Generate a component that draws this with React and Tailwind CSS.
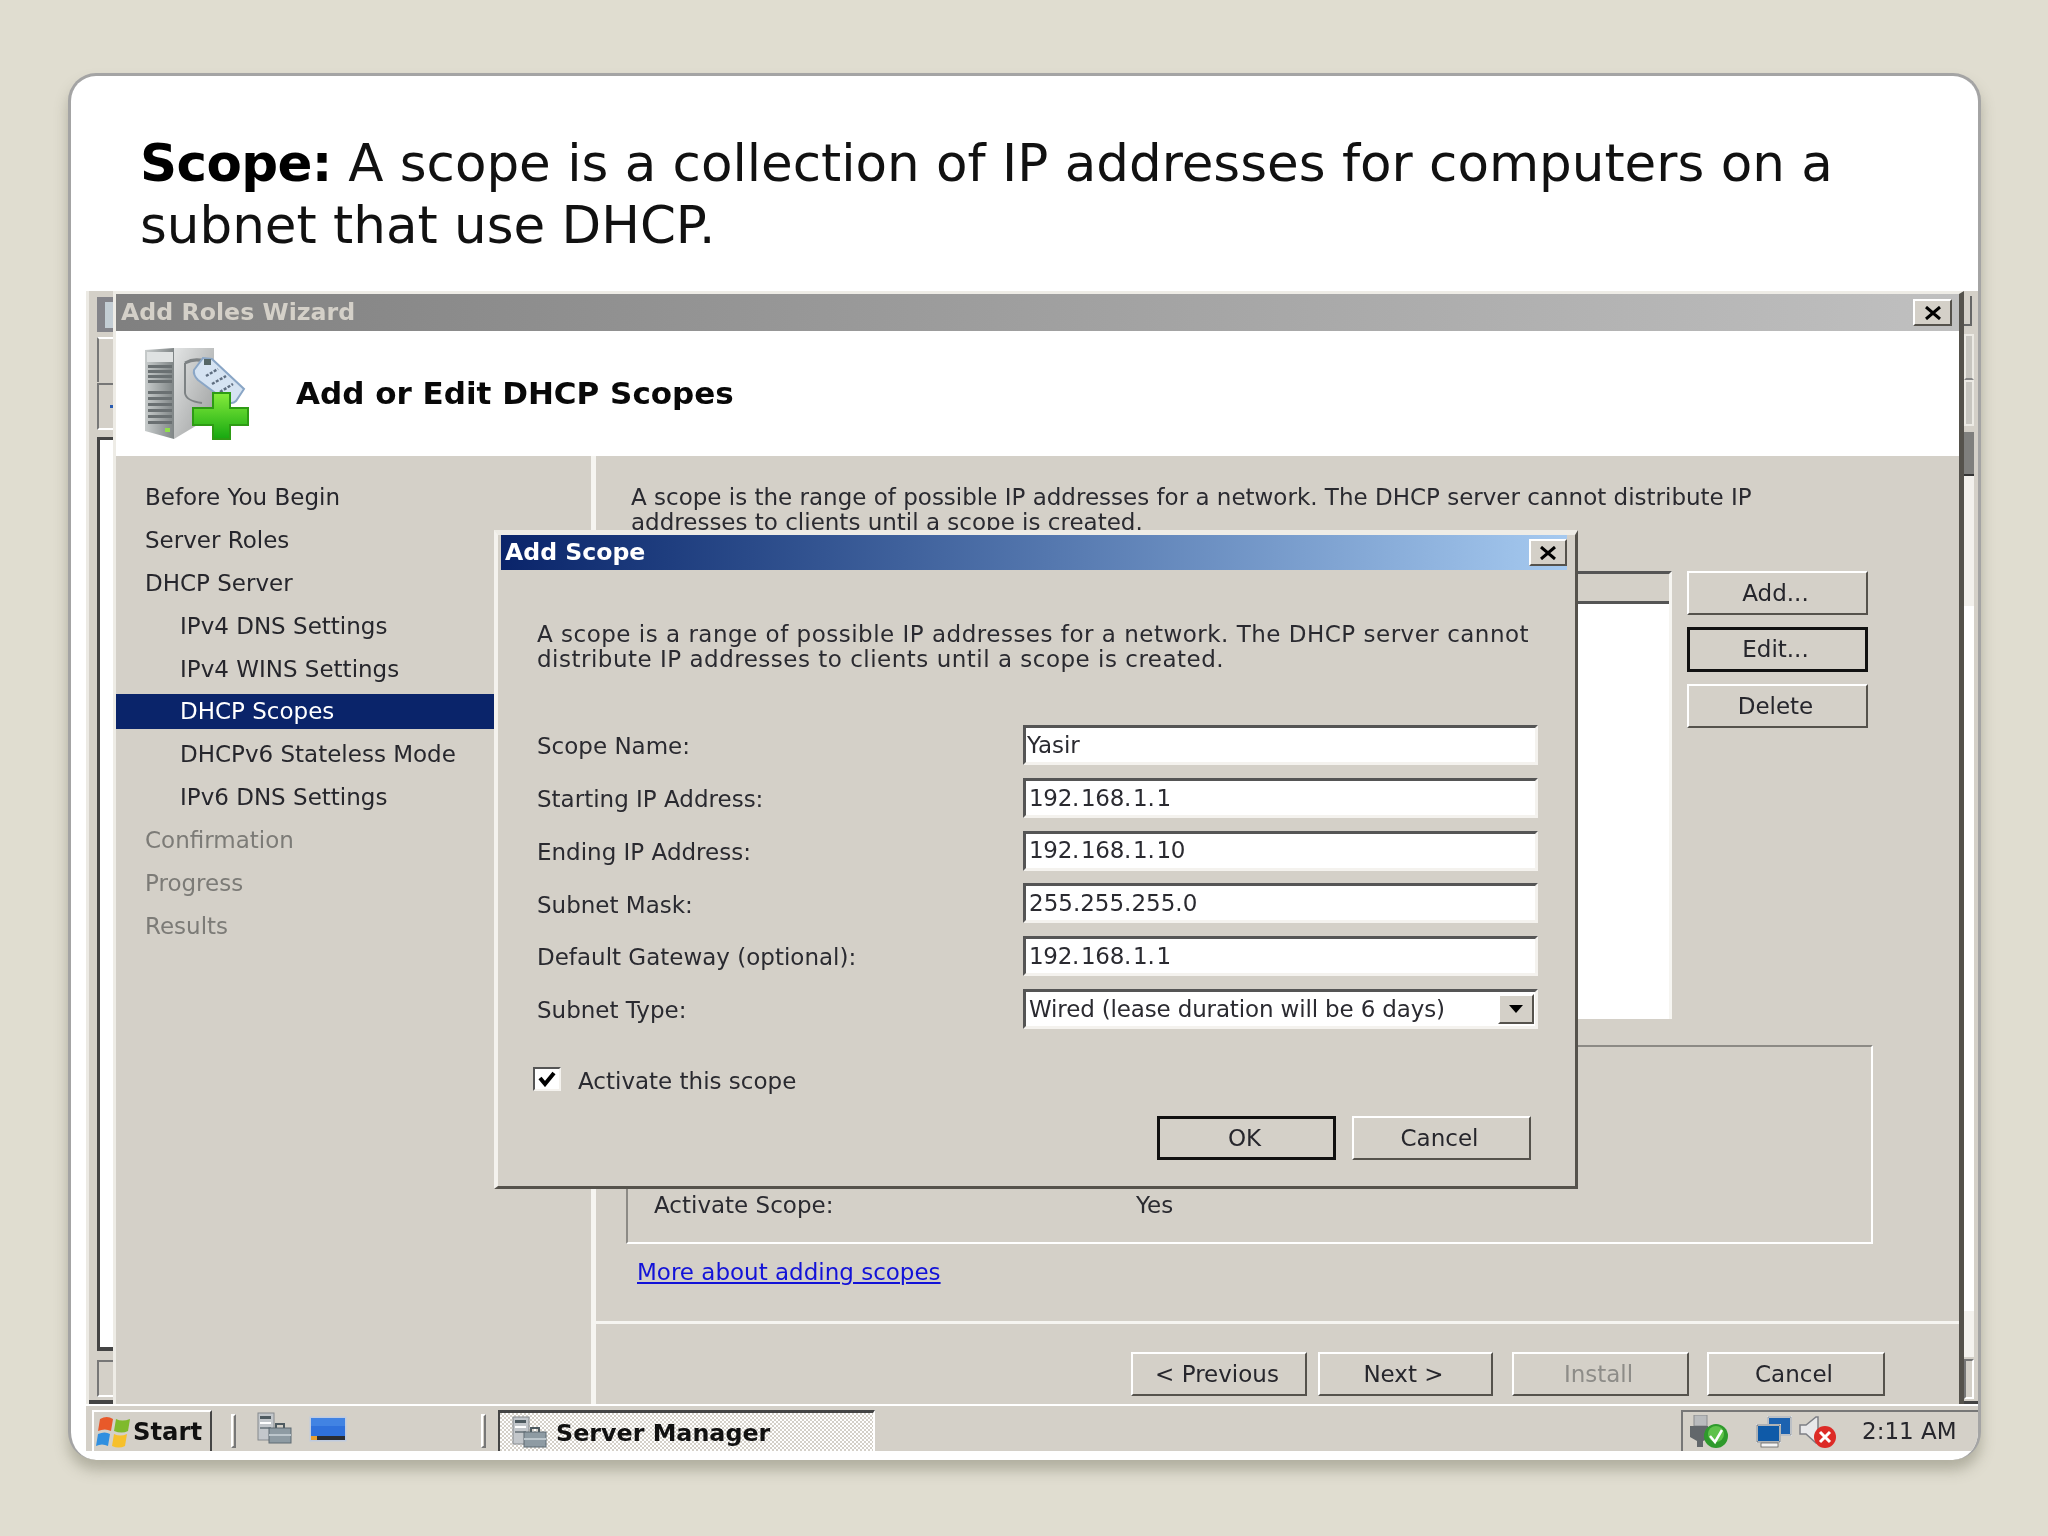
import React from "react";

const raised = "border-2 border-t-white border-l-white border-r-[#55524c] border-b-[#55524c] bg-[#d4d0c8]";
const sunken = "border-[3px] border-t-[#555] border-l-[#555] border-r-[#f4f2ee] border-b-[#f4f2ee] bg-white";

function CloseX({ className }) {
  return (
    <div className={"flex items-center justify-center " + raised + " " + className}>
      <svg width="18" height="14" viewBox="0 0 18 14">
        <path d="M2 1 L16 13 M16 1 L2 13" stroke="#000" strokeWidth="3" fill="none" />
      </svg>
    </div>
  );
}

function ServerLarge() {
  return (
    <svg width="106" height="94" viewBox="0 0 106 94" className="ml-[28px] shrink-0">
      <defs>
        <linearGradient id="tw" x1="0" x2="1" y1="0" y2="0">
          <stop offset="0" stopColor="#c8cccc" />
          <stop offset="1" stopColor="#7f8586" />
        </linearGradient>
        <linearGradient id="sd" x1="0" x2="1" y1="0" y2="1">
          <stop offset="0" stopColor="#e2e4e4" />
          <stop offset="1" stopColor="#9a9c9c" />
        </linearGradient>
        <linearGradient id="pl" x1="0" x2="0" y1="0" y2="1">
          <stop offset="0" stopColor="#86ec3c" />
          <stop offset="1" stopColor="#16a810" />
        </linearGradient>
      </defs>
      <path d="M1 3 L30 1 L30 92 L1 84 Z" fill="url(#tw)" />
      <path d="M30 1 L70 1 L70 68 L30 92 Z" fill="url(#sd)" />
      <rect x="3" y="5" width="26" height="10" fill="#dfe2e2" />
      <g fill="#6a7072">
        <rect x="4" y="18" width="24" height="3" />
        <rect x="4" y="23" width="24" height="3" />
        <rect x="4" y="28" width="24" height="3" />
        <rect x="4" y="33" width="24" height="3" />
        <rect x="4" y="44" width="24" height="3" />
        <rect x="4" y="50" width="24" height="3" />
        <rect x="4" y="56" width="24" height="3" />
        <rect x="4" y="62" width="24" height="3" />
        <rect x="4" y="68" width="24" height="3" />
        <rect x="4" y="74" width="24" height="3" />
      </g>
      <rect x="21" y="81" width="5" height="4" fill="#8fe04a" />
      <path d="M41 16 Q50 11 60 14" stroke="#7d8284" strokeWidth="3" fill="none" />
      <path d="M41 16 L41 46 Q42 54 58 56" stroke="#7d8284" strokeWidth="2" fill="none" />
      <path d="M50 23 L59 11 L68 12 L100 42 L92 54 Q88 58 82 54 L54 33 Q49 28 50 23 Z" fill="#d5e3f2" stroke="#8aa6c6" strokeWidth="2" />
      <rect x="60" y="12" width="7" height="6" fill="#566" />
      <path d="M62 29 L74 22 M68 37 L82 29 M76 45 L89 37" stroke="#5f6e80" strokeWidth="2.5" strokeDasharray="3 1.5" />
      <path d="M49 61 H69 V46 H86 V61 H104 V78 H86 V92 H69 V78 H49 Z" fill="url(#pl)" stroke="#2e9b14" strokeWidth="2" />
    </svg>
  );
}

function ServerSmall() {
  return (
    <svg width="38" height="32" viewBox="0 0 38 32" className="shrink-0">
      <rect x="3" y="1" width="16" height="27" fill="#c3c7cb" stroke="#868a8e" />
      <rect x="5" y="4" width="11" height="3" fill="#4e5a60" />
      <rect x="5" y="10" width="11" height="2" fill="#fff" />
      <rect x="5" y="15" width="11" height="2" fill="#7d868c" />
      <rect x="14" y="16" width="22" height="15" fill="#8e9ba3" stroke="#5e6a72" />
      <path d="M21 16 L21 12 L29 12 L29 16" stroke="#4e5a60" strokeWidth="2" fill="none" />
      <rect x="14" y="22" width="22" height="2" fill="#bcc6cc" />
    </svg>
  );
}

function Monitor() {
  return (
    <svg width="38" height="26" viewBox="0 0 38 26" className="shrink-0">
      <rect x="0.5" y="0.5" width="37" height="25" fill="#bfcbe0" />
      <rect x="2" y="2" width="34" height="18" fill="#2f71dc" />
      <rect x="2" y="2" width="34" height="8" fill="#4f8fe8" opacity="0.6" />
      <rect x="8" y="20" width="28" height="4" fill="#2a2d33" />
      <rect x="2" y="20" width="6" height="4" fill="#e8a030" />
    </svg>
  );
}

function WinFlag() {
  return (
    <svg width="36" height="36" viewBox="0 0 36 36" className="shrink-0">
      <path d="M4 5 Q11 1 17 5 L15 17 Q9 14 2 17 Z" fill="#e8592a" />
      <path d="M20 5 Q26 8 34 5 L32 17 Q26 20 18 17 Z" fill="#7fba2c" />
      <path d="M2 20 Q9 17 14 20 L12 32 Q6 29 0 32 Z" fill="#2f8fe0" />
      <path d="M18 20 Q24 23 31 20 L29 32 Q23 35 16 32 Z" fill="#f6c02c" />
    </svg>
  );
}

function TrayPlug() {
  return (
    <svg width="40" height="34" viewBox="0 0 40 34" className="shrink-0">
      <rect x="5" y="0" width="13" height="11" fill="#b9bbbd" stroke="#8a8c8e" />
      <path d="M1 11 L19 11 L19 24 L14 26 L14 32 L8 32 L8 26 L1 22 Z" fill="#62676b" />
      <circle cx="27" cy="21" r="12" fill="#2f9a2c" />
      <circle cx="27" cy="19" r="8" fill="#5fc24a" />
      <path d="M21 21 L26 27 L33 15" stroke="#fff" strokeWidth="2.5" fill="none" />
    </svg>
  );
}

function TrayNet() {
  return (
    <svg width="36" height="32" viewBox="0 0 36 32" className="shrink-0">
      <rect x="12" y="1" width="23" height="18" fill="#1c62b0" stroke="#e8eef5" strokeWidth="2" />
      <rect x="12" y="1" width="23" height="18" fill="none" stroke="#555" strokeWidth="0.6" />
      <rect x="1" y="9" width="23" height="17" fill="#0f5aa8" stroke="#f5f7fa" strokeWidth="2" />
      <rect x="1" y="9" width="23" height="17" fill="none" stroke="#333" strokeWidth="0.7" />
      <rect x="5" y="27" width="17" height="4" fill="#f5f5f5" stroke="#555" strokeWidth="0.7" />
    </svg>
  );
}

function TraySound() {
  return (
    <svg width="38" height="32" viewBox="0 0 38 32" className="shrink-0">
      <path d="M1 9 L7 9 L17 1 L19 1 L19 27 L17 27 L7 18 L1 18 Z" fill="#e8e8ea" stroke="#7d7f85" strokeWidth="1.5" />
      <circle cx="26" cy="21" r="11" fill="#dd2a26" />
      <path d="M21 16 L31 26 M31 16 L21 26" stroke="#fff" strokeWidth="3" />
    </svg>
  );
}

function Btn({ children, className = "", disabled }) {
  return (
    <div className={"flex items-center justify-center h-[44px] text-[23px] pr-[4px] " + raised + " " + (disabled ? "text-[#8d8c88] " : "text-[#26262c] ") + className}>
      {children}
    </div>
  );
}

function StripLeft() {
  return (
    <div className="w-[27px] shrink-0 flex flex-col pl-[8px] border-l-[3px] border-[#eceae4] bg-[#d4d0c8] pt-[6px]">
      <div className="h-[35px] w-[16px] bg-[#84848a] flex justify-end">
        <div className="w-[8px] h-[26px] mt-[5px] bg-[#c3cdd4]" />
      </div>
      <div className="mt-[5px] h-[45px] border-l-2 border-t-2 border-l-[#777] border-t-white" />
      <div className="mt-[1px] h-[47px] border-l-2 border-t-2 border-b-2 border-l-[#777] border-t-[#777] border-b-white flex items-center justify-end">
        <div className="w-[3px] h-[3px] bg-[#2a5cb0]" />
      </div>
      <div className="mt-[7px] flex-1 border-l-[3px] border-t-[3px] border-b-[4px] border-[#444] bg-white" />
      <div className="mt-[9px] h-[37px] border-l-2 border-t-2 border-[#777] border-b-2 border-b-white" />
      <div className="mt-[3px] h-[4px] -ml-[8px] bg-[#444]" />
    </div>
  );
}

function StripRight() {
  return (
    <div className="flex-1 flex flex-col bg-[#d4d0c8] pt-[5px] pr-[4px]">
      <div className="h-[30px] w-[8px] border-r-2 border-b-2 border-[#666]" />
      <div className="mt-[8px] h-[46px] border-2 border-[#eceae4] bg-[#c8c6c0] border-b-[#888]" />
      <div className="h-[46px] border-2 border-[#eceae4] bg-[#c8c6c0]" />
      <div className="mt-[6px] h-[44px] bg-[#7f7f7d] border-b-2 border-[#333]" />
      <div className="h-[130px] bg-[#f2f0ec]" />
      <div className="flex-1 bg-white" />
      <div className="h-[46px] border-2 border-[#f4f2ee] bg-[#f4f2ee]" />
      <div className="mt-[2px] h-[40px] border-2 border-l-[#777] border-t-[#777] border-r-white border-b-white bg-[#d4d0c8]" />
      <div className="mt-[2px] h-[3px] -mr-[4px] bg-[#444]" />
    </div>
  );
}

const sidebar = [
  ["Before You Begin", 0, "", false],
  ["Server Roles", 0, "", false],
  ["DHCP Server", 0, "", false],
  ["IPv4 DNS Settings", 1, "", false],
  ["IPv4 WINS Settings", 1, "", false],
  ["DHCP Scopes", 1, "sel", false],
  ["DHCPv6 Stateless Mode", 1, "", false],
  ["IPv6 DNS Settings", 1, "", false],
  ["Confirmation", 0, "", true],
  ["Progress", 0, "", true],
  ["Results", 0, "", true],
];

function Sidebar() {
  return (
    <div className="w-[480px] shrink-0 border-r-[5px] border-[#f6f5f1] pt-[20px] flex flex-col">
      {sidebar.map(([t, sub, sel, dim]) => (
        <div key={t} className="h-[42.85px] flex items-center">
          <div
            className={
              "h-[35px] flex items-center w-[378px] text-[23px] " +
              (sub ? "pl-[64px] " : "pl-[29px] ") +
              (sel ? "bg-[#0a246a] text-white " : dim ? "text-[#7c7b77] " : "text-[#26262c] ")
            }
          >
            {t}
          </div>
        </div>
      ))}
    </div>
  );
}

function RightPane() {
  return (
    <div className="flex-1 flex flex-col pt-[29px]">
      <div className="pl-[35px] text-[23px] leading-[25px] h-[50px] text-[#2a2a30] whitespace-nowrap">
        <div>A scope is the range of possible IP addresses for a network. The DHCP server cannot distribute IP</div>
        <div>addresses to clients until a scope is created.</div>
      </div>
      <div className="mt-[36px] ml-[30px] flex gap-[15px]">
        <div className="w-[1046px] h-[448px] border-t-[3px] border-r-[3px] border-t-[#555] border-r-[#f6f5f1] bg-white">
          <div className="h-[30px] bg-[#d4d0c8] border-b-[3px] border-[#555]" />
        </div>
        <div className="flex flex-col gap-[12px] w-[181px]">
          <Btn>Add...</Btn>
          <div className="border-[3px] border-[#111] h-[45px] flex items-center justify-center text-[23px] pr-[4px] bg-[#d4d0c8] text-[#26262c]">Edit...</div>
          <Btn>Delete</Btn>
        </div>
      </div>
      <div className="mt-[26px] ml-[30px] w-[1247px] h-[199px] border-2 border-[#8c8a85] border-b-white border-r-white flex items-end pb-[20px] pl-[26px] text-[23px] text-[#2a2a30]">
        <span className="w-[482px]">Activate Scope:</span>
        <span>Yes</span>
      </div>
      <div className="mt-[15px] h-[26px] ml-[41px] text-[23px] leading-[26px] text-[#1212d8] underline">More about adding scopes</div>
      <div className="mt-[36px] h-[3px] bg-[#f6f5f1]" />
      <div className="mt-[28px] flex ml-[535px]">
        <Btn className="w-[176px]">&lt; Previous</Btn>
        <Btn className="w-[175px] ml-[11px]">Next &gt;</Btn>
        <Btn className="w-[177px] ml-[19px]" disabled>Install</Btn>
        <Btn className="w-[178px] ml-[18px]">Cancel</Btn>
      </div>
    </div>
  );
}

const fields = [
  ["Scope Name:", "Yasir", "pl-[1px]"],
  ["Starting IP Address:", "192. 168. 1. 1", "pl-[3px] [word-spacing:-5px] tracking-[-0.3px]"],
  ["Ending IP Address:", "192. 168. 1. 10", "pl-[3px] [word-spacing:-5px] tracking-[-0.3px]"],
  ["Subnet Mask:", "255.255.255.0", "pl-[3px]"],
  ["Default Gateway (optional):", "192. 168. 1. 1", "pl-[3px] [word-spacing:-5px] tracking-[-0.3px]"],
];

function Dialog() {
  return (
    <div className="absolute left-[378px] top-[236px] w-[1084px] h-[659px] bg-[#d4d0c8] border-t-[5px] border-l-[4px] border-r-[3px] border-b-[3px] border-t-[#eeece6] border-l-[#f4f2ee] border-r-[#55524c] border-b-[#55524c] flex flex-col text-[#2a2a30]">
      <div className="h-[35px] shrink-0 ml-[3px] mr-[8px] bg-gradient-to-r from-[#0a246a] to-[#a6caf0] flex items-center justify-between pl-[4px] pr-[0px]">
        <span className="font-bold text-white text-[23.6px]">Add Scope</span>
        <CloseX className="w-[38px] h-[27px]" />
      </div>
      <div className="pl-[39px] pt-[52px] text-[23px] leading-[25px] tracking-[0.5px] whitespace-nowrap">
        <div>A scope is a range of possible IP addresses for a network. The DHCP server cannot</div>
        <div>distribute IP addresses to clients until a scope is created.</div>
      </div>
      <div className="mt-[53px] pl-[39px] flex flex-col gap-[12.8px]">
        {fields.map(([l, v, p]) => (
          <div key={l} className="h-[40px] flex items-center text-[23px]">
            <span className="w-[486px] shrink-0 pt-[3px]">{l}</span>
            <div className={"w-[515px] h-[40px] flex items-center " + sunken + " " + p}>{v}</div>
          </div>
        ))}
        <div className="h-[40px] flex items-center text-[23px]">
          <span className="w-[486px] shrink-0 pt-[3px]">Subnet Type:</span>
          <div className={"w-[515px] h-[40px] flex items-center justify-between pl-[3px] pr-[1px] " + sunken}>
            <span className="tracking-[-0.15px]">Wired (lease duration will be 6 days)</span>
            <div className={"w-[36px] h-[30px] flex items-center justify-center " + raised}>
              <svg width="14" height="8" viewBox="0 0 14 8"><path d="M0 0 H14 L7 8 Z" fill="#000" /></svg>
            </div>
          </div>
        </div>
      </div>
      <div className="mt-[38px] pl-[35px] flex items-center h-[24px] text-[23px]">
        <div className="w-[28px] h-[24px] border-2 border-t-[#555] border-l-[#555] border-r-[#f4f2ee] border-b-[#f4f2ee] bg-white flex items-center justify-center">
          <svg width="18" height="16" viewBox="0 0 18 16"><path d="M2 7 L7 13 L16 2" stroke="#000" strokeWidth="4" fill="none" /></svg>
        </div>
        <span className="ml-[17px] pt-[4px]">Activate this scope</span>
      </div>
      <div className="mt-[25px] pr-[44px] flex justify-end gap-[16px]">
        <div className="w-[179px] h-[44px] border-[3px] border-[#111] flex items-center justify-center text-[23px] pr-[4px] text-[#26262c]">OK</div>
        <Btn className="w-[179px]">Cancel</Btn>
      </div>
    </div>
  );
}

function Wizard() {
  return (
    <div className="relative w-[1851px] shrink-0 border-l-[3px] border-t-[3px] border-r-[5px] border-l-[#eeece6] border-t-[#eeece6] border-r-[#55524c] flex flex-col bg-[#d4d0c8]">
      <div className="h-[37px] shrink-0 bg-gradient-to-r from-[#808080] to-[#c0c0c0] flex items-center justify-between pl-[5px] pr-[7px]">
        <span className="font-bold text-[#d4d0c8] text-[23.7px]">Add Roles Wizard</span>
        <CloseX className="w-[39px] h-[27px]" />
      </div>
      <div className="h-[125px] shrink-0 bg-white flex items-center">
        <ServerLarge />
        <span className="ml-[46px] font-bold text-[31px] text-[#080808]">Add or Edit DHCP Scopes</span>
      </div>
      <div className="flex-1 flex min-h-0">
        <Sidebar />
        <RightPane />
      </div>
      <Dialog />
    </div>
  );
}

function Taskbar() {
  return (
    <div className="h-[47px] shrink-0 bg-[#d4d0c8] border-t-2 border-white flex pt-[4px] pl-[6px] text-[#111]">
      <div className="w-[120px] h-[41px] border-t-2 border-l-2 border-r-2 border-t-white border-l-white border-r-[#444] flex items-center pl-[2px] gap-[1px] font-bold text-[24.3px]">
        <WinFlag />
        <span className="pt-[1px]">Start</span>
      </div>
      <div className="ml-[19px] mt-[4px] w-[5px] h-[34px] border-l-2 border-t-2 border-r-2 border-b-2 border-l-white border-t-white border-r-[#777] border-b-[#777]" />
      <div className="ml-[19px] mt-[2px]"><ServerSmall /></div>
      <div className="ml-[16px] mt-[6px]"><Monitor /></div>
      <div className="ml-[134px] mt-[4px] w-[5px] h-[34px] border-l-2 border-t-2 border-r-2 border-b-2 border-l-white border-t-white border-r-[#777] border-b-[#777]" />
      <div className="ml-[12px] w-[377px] h-[41px] border-t-[3px] border-l-2 border-r-2 border-t-[#444] border-l-[#444] border-r-white flex items-center pl-[10px] bg-[image:repeating-conic-gradient(#ffffff_0_25%,#d4d0c8_0_50%)] bg-[length:4px_4px]">
        <ServerSmall />
        <span className="ml-[8px] pt-[3px] font-bold text-[23.8px]">Server Manager</span>
      </div>
      <div className="ml-auto w-[297px] h-[41px] border-t-2 border-l-2 border-[#777] flex items-center pl-[6px]">
        <TrayPlug />
        <div className="ml-[27px]"><TrayNet /></div>
        <div className="ml-[7px]"><TraySound /></div>
        <span className="ml-[25px] text-[23px] text-[#26262c]">2:11 AM</span>
      </div>
    </div>
  );
}

export default function App() {
  return (
    <div className="w-[2048px] h-[1536px] overflow-hidden bg-[#e0ddd0] pt-[73px] pl-[68px] font-['DejaVu_Sans',sans-serif]">
      <div className="w-[1913px] h-[1387px] rounded-[28px] overflow-hidden bg-white border-t-[3px] border-l-[3px] border-r-[3px] border-[#a4a4a4] flex flex-col shadow-[0_10px_14px_rgba(90,90,70,0.35)]">
        <div className="h-[215px] shrink-0 pl-[69px] pt-[56px] text-[51.5px] leading-[62px] text-[#111]">
          <div className="whitespace-nowrap"><b className="font-bold text-black tracking-[-0.6px]">Scope:</b> A scope is a collection of IP addresses for computers on a</div>
          <div>subnet that use DHCP.</div>
        </div>
        <div className="h-[1160px] ml-[15px] flex flex-col shrink-0 bg-[#f2f0ec] blur-[0.5px]">
          <div className="flex-1 flex min-h-0">
            <StripLeft />
            <Wizard />
            <StripRight />
          </div>
          <Taskbar />
        </div>
      </div>
    </div>
  );
}
